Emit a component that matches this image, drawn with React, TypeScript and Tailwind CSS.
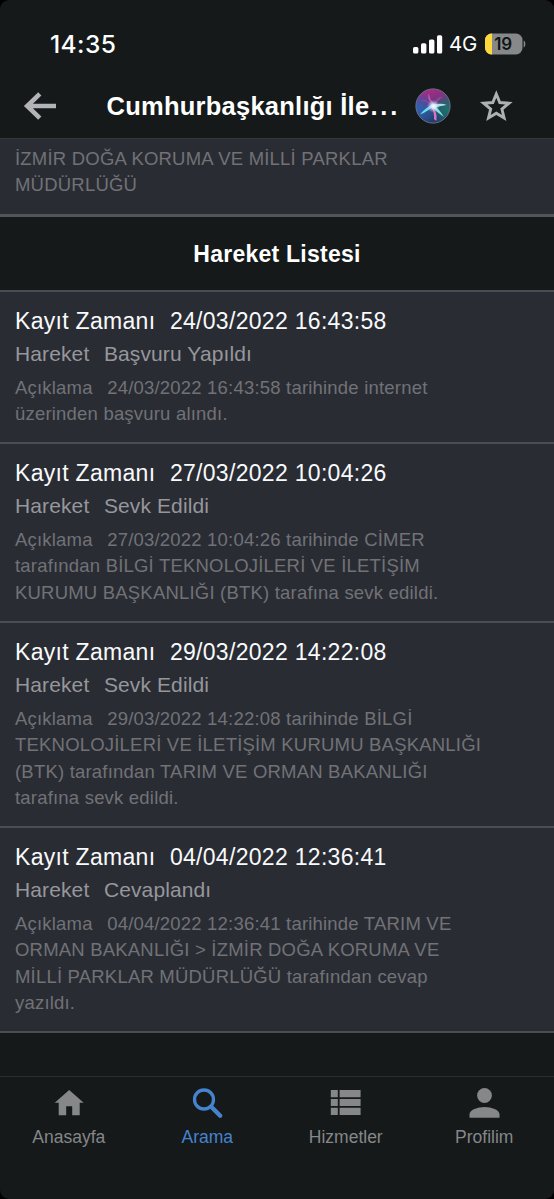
import React from "react";

type Movement = { time: string; action: string; lines: string[]; height: string };

const movements: Movement[] = [
  {
    time: "24/03/2022 16:43:58",
    action: "Başvuru Yapıldı",
    lines: ["24/03/2022 16:43:58 tarihinde internet", "üzerinden başvuru alındı."],
    height: "h-[152px]",
  },
  {
    time: "27/03/2022 10:04:26",
    action: "Sevk Edildi",
    lines: [
      "27/03/2022 10:04:26 tarihinde CİMER",
      "tarafından BİLGİ TEKNOLOJİLERİ VE İLETİŞİM",
      "KURUMU BAŞKANLIĞI (BTK) tarafına sevk edildi.",
    ],
    height: "h-[179px]",
  },
  {
    time: "29/03/2022 14:22:08",
    action: "Sevk Edildi",
    lines: [
      "29/03/2022 14:22:08 tarihinde BİLGİ",
      "TEKNOLOJİLERİ VE İLETİŞİM KURUMU BAŞKANLIĞI",
      "(BTK) tarafından TARIM VE ORMAN BAKANLIĞI",
      "tarafına sevk edildi.",
    ],
    height: "h-[205px]",
  },
  {
    time: "04/04/2022 12:36:41",
    action: "Cevaplandı",
    lines: [
      "04/04/2022 12:36:41 tarihinde TARIM VE",
      "ORMAN BAKANLIĞI > İZMİR DOĞA KORUMA VE",
      "MİLLİ PARKLAR MÜDÜRLÜĞÜ tarafından cevap",
      "yazıldı.",
    ],
    height: "h-[205px]",
  },
];

function StatusBar() {
  return (
    <div className="flex h-[76px] items-center pt-[12px] pl-[50px] pr-[27px] font-['Inter',sans-serif] text-white">
      <span className="w-[70px] text-[24.5px] leading-none font-medium tracking-[0.4px]">14:35</span>
      <div className="ml-auto flex items-center">
        <svg width="30" height="19" viewBox="0 0 30 19" fill="#fff">
          <rect x="0" y="12" width="5.4" height="6.5" rx="1.6" />
          <rect x="8" y="8.2" width="5.4" height="10.3" rx="1.6" />
          <rect x="16" y="4.4" width="5.4" height="14.1" rx="1.6" />
          <rect x="24" y="0.3" width="5.2" height="18.2" rx="1.6" />
        </svg>
        <span className="ml-[6px] w-[29px] text-[20.5px] leading-none tracking-[-0.2px]">4G</span>
        <svg className="ml-[7px]" width="42" height="22" viewBox="0 0 42 22">
          <defs>
            <clipPath id="battery">
              <rect x="0" y="0.5" width="37.5" height="21" rx="6.5" />
            </clipPath>
          </defs>
          <g clipPath="url(#battery)">
            <rect width="38" height="22" fill="#86888a" />
            <rect width="7" height="22" fill="#ffd83b" />
          </g>
          <path d="M38.7 7.5c2.2.9 2.2 6.1 0 7z" fill="#86888a" />
          <text x="18.2" y="17" textAnchor="middle" fontFamily="Inter, sans-serif" fontWeight="600" fontSize="17" fill="#111516">
            19
          </text>
        </svg>
      </div>
    </div>
  );
}

function SiriOrb() {
  return (
    <svg width="36" height="36" viewBox="0 0 36 36">
      <defs>
        <linearGradient id="orbBase" x1="0.3" y1="0" x2="0.6" y2="1">
          <stop offset="0" stopColor="#b02b86" />
          <stop offset="0.4" stopColor="#72347f" />
          <stop offset="0.7" stopColor="#2b477c" />
          <stop offset="1" stopColor="#213a66" />
        </linearGradient>
        <radialGradient id="orbTeal" cx="0.92" cy="0.6" r="0.48">
          <stop offset="0" stopColor="#1b7467" />
          <stop offset="1" stopColor="#1b7467" stopOpacity="0" />
        </radialGradient>
        <radialGradient id="orbBlue" cx="0.08" cy="0.58" r="0.52">
          <stop offset="0" stopColor="#2764b4" />
          <stop offset="1" stopColor="#2764b4" stopOpacity="0" />
        </radialGradient>
        <radialGradient id="orbGlow" cx="0.5" cy="0.5" r="0.5">
          <stop offset="0" stopColor="#fff" />
          <stop offset="0.4" stopColor="#e6f4ff" stopOpacity="0.75" />
          <stop offset="1" stopColor="#b9a5ff" stopOpacity="0" />
        </radialGradient>
      </defs>
      <circle cx="18" cy="18" r="17" fill="url(#orbBase)" />
      <circle cx="18" cy="18" r="17" fill="url(#orbTeal)" />
      <circle cx="18" cy="18" r="17" fill="url(#orbBlue)" />
      <path d="M18 17Q10 10 5 13Q11 12 17 18Z" fill="#c04cae" opacity="0.5" />
      <path d="M18 17Q11 11 14 5Q14 11 20 17Z" fill="#e473c3" opacity="0.6" />
      <path d="M18 18Q22 7 28 9Q23 11 20 19Z" fill="#b34ba4" opacity="0.6" />
      <path d="M16 17Q27 14.5 31.5 17Q25 17.5 18 20.5Z" fill="#a6e6e0" />
      <path d="M20 16.5Q14 23 5 26.5Q9 21 17 16.5Z" fill="#67ddeb" />
      <path d="M19 17Q24 21 29 29Q22 24 17 20Z" fill="#7de6d4" />
      <path d="M17 18Q22.5 24 21.5 32.5Q20 32.5 19 31Q19.5 24 16 18Z" fill="#e070c7" />
      <circle cx="18.3" cy="18.2" r="6.5" fill="url(#orbGlow)" />
      <circle cx="18" cy="18" r="17.1" fill="none" stroke="#69718c" strokeWidth="1" />
    </svg>
  );
}

function Header() {
  return (
    <header className="flex h-[62px] items-center pb-[2px]">
      <svg className="ml-[23px]" width="34" height="30" viewBox="0 0 34 30" fill="none" stroke="#b4b3b8" strokeWidth="4.6">
        <path d="M33 15H4M16.8 2.8 4.2 15 16.8 27.2" />
      </svg>
      <h1 className="ml-[49.5px] w-[304px] text-[25.5px] leading-[30px] font-bold tracking-[0.25px] whitespace-nowrap text-white">
        Cumhurbaşkanlığı İle<span className="ml-[1px] tracking-[2.8px]">...</span>
      </h1>
      <div className="ml-[4px] flex items-center gap-[29px]">
        <SiriOrb />
        <svg className="overflow-visible" width="32" height="34" viewBox="0 0 32 34" fill="none" stroke="#aeb0b1" strokeWidth="2.9" strokeLinejoin="miter">
          <path d="M16.3 5 19.8 13.5 29 14.2 21.9 20.1 24.1 29 16.3 24.2 8.5 29 10.7 20.1 3.6 14.2 12.8 13.5z" />
        </svg>
      </div>
    </header>
  );
}

function Label({ children }: { children: React.ReactNode }) {
  return <span className="mr-[14.5px]">{children}</span>;
}

function MovementRow({ item }: { item: Movement }) {
  return (
    <li className={`${item.height} border-b-2 border-[#4b4d54] bg-[#2a2c34] pt-[12.5px] pl-[15px] whitespace-nowrap`}>
      <div className="text-[23px] leading-[33px] tracking-[0.3px] text-[#f8fafb]">
        <Label>Kayıt Zamanı</Label>
        {item.time}
      </div>
      <div className="-mt-[1px] text-[21px] leading-[33px] tracking-[0.12px] text-[#96979b]">
        <Label>Hareket</Label>
        {item.action}
      </div>
      <div className="mt-[5px] text-[18.5px] leading-[26.6px] tracking-[0.2px] text-[#717276]">
        {item.lines.map((line, i) => (
          <div key={line}>
            {i === 0 && <Label>Açıklama</Label>}
            {line}
          </div>
        ))}
      </div>
    </li>
  );
}

const tabs = [
  { label: "Anasayfa", icon: <path d="M15.2 1 29.7 13.7h-4V26.2h-7.5v-9h-6v9H4.7V13.7H.7z" fill="currentColor" /> },
  {
    label: "Arama",
    active: true,
    icon: (
      <g fill="none" stroke="currentColor">
        <circle cx="11" cy="10.5" r="9.5" strokeWidth="3.3" />
        <path d="m19.5 19 7.7 7.7" strokeWidth="4.4" strokeLinecap="round" />
      </g>
    ),
  },
  {
    label: "Hizmetler",
    icon: (
      <path
        d="M-.2 1h7v7.2h-7zM8.6 1h21v7.2h-21zM-.2 9.9h7v7.2h-7zM8.6 9.9h21v7.2h-21zM-.2 18.8h7V26h-7zM8.6 18.8h21V26h-21z"
        fill="currentColor"
      />
    ),
  },
  {
    label: "Profilim",
    icon: (
      <g fill="currentColor">
        <circle cx="14.5" cy="6.5" r="7.4" />
        <path d="M-.5 28.8v-3.5C-.5 21 7.5 18 14.5 18s15 3 15 7.3v3.5z" />
      </g>
    ),
  },
];

function TabBar() {
  return (
    <nav className="grid h-[123px] grid-cols-4 border-t border-[#2b2e30]">
      {tabs.map((tab) => (
        <div
          key={tab.label}
          className={`flex flex-col items-center pt-[12px] ${tab.active ? "text-[#4683cf]" : "text-[#858788]"}`}
        >
          <svg className="overflow-visible" width="30" height="30" viewBox="0 0 30 30">
            {tab.icon}
          </svg>
          <span className="mt-[7px] mr-[1px] text-[17.5px] leading-[22px]">{tab.label}</span>
        </div>
      ))}
    </nav>
  );
}

export default function App() {
  return (
    <div className="h-[1199px] w-[554px] overflow-hidden bg-black font-['Liberation_Sans',Arial,sans-serif]">
      <div className="flex h-full flex-col overflow-hidden rounded-[9px] bg-[#15191a]">
        <StatusBar />
        <Header />
        <section className="h-[79px] border-t border-b-[3px] border-t-[#33363a] border-b-[#52545b] bg-[#2a2c34] pt-[6.5px] pl-[15px] text-[18.5px] leading-[26.6px] tracking-[0.21px] whitespace-nowrap text-[#717276]">
          <div>İZMİR DOĞA KORUMA VE MİLLİ PARKLAR</div>
          <div>MÜDÜRLÜĞÜ</div>
        </section>
        <h2 className="flex h-[75px] items-center justify-center border-b-2 border-[#4b4d54] pt-[2px] text-[23px] font-bold tracking-[0.25px] text-white">
          Hareket Listesi
        </h2>
        <ul>
          {movements.map((item) => (
            <MovementRow key={item.time} item={item} />
          ))}
        </ul>
        <div className="flex-1" />
        <TabBar />
      </div>
    </div>
  );
}
